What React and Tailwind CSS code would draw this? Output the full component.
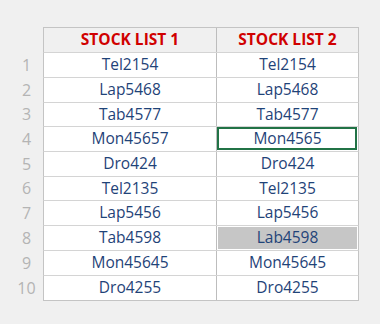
import React from "react";

const rows = [
    { n: 1, a: "Tel2154", b: "Tel2154", h: "h-[25px]" },
    { n: 2, a: "Lap5468", b: "Lap5468", h: "h-[25px]" },
    { n: 3, a: "Tab4577", b: "Tab4577", h: "h-[24px]" },
    { n: 4, a: "Mon45657", b: "Mon4565", h: "h-[25px]", active: true },
    { n: 5, a: "Dro424", b: "Dro424", h: "h-[25px]" },
    { n: 6, a: "Tel2135", b: "Tel2135", h: "h-[24px]" },
    { n: 7, a: "Lap5456", b: "Lap5456", h: "h-[25px]" },
    { n: 8, a: "Tab4598", b: "Lab4598", h: "h-[25px]", grey: true },
    { n: 9, a: "Mon45645", b: "Mon45645", h: "h-[25px]" },
    { n: 10, a: "Dro4255", b: "Dro4255", h: "h-[25px]" },
];

const App = () => {
    return (
        <div className="w-[380px] h-[324px] bg-[#f0f0f0] pt-[27px] font-['Open_Sans',sans-serif]">
            {/* header */}
            <div className="flex h-[25px]">
                <div className="w-[43px]" />
                <div className="flex border border-b-0 border-[#c4c4c4] bg-[#f0f0f0]">
                    <div className="w-[173px] border-r border-[#bdbdbd] flex items-center justify-center text-[15.5px] font-bold text-[#d00000] leading-none">
                        STOCK LIST 1
                    </div>
                    <div className="w-[141px] flex items-center justify-center text-[15.5px] font-bold text-[#d00000] leading-none">
                        STOCK LIST 2
                    </div>
                </div>
            </div>

            {rows.map((row) => (
                <div key={row.n} className={`flex ${row.h}`}>
                    <div className="w-[43px] pl-[10px] flex items-center">
                        <span className="w-[33px] text-center text-[16px] text-[#b4b4b4] leading-none">{row.n}</span>
                    </div>
                    <div className="flex border-x border-t border-x-[#c4c4c4] border-t-[#d4d4d4] bg-white">
                        <div className="w-[173px] border-r border-[#bdbdbd] flex items-center justify-center text-[15.5px] font-medium text-[#1f4378] leading-none">
                            {row.a}
                        </div>
                        <div className="w-[141px] relative flex items-center justify-center text-[15.5px] font-medium text-[#1f4378] leading-none">
                            {row.grey && (
                                <div className="absolute inset-[1px] bg-[#c6c6c6]" />
                            )}
                            {row.active && (
                                <div className="absolute top-0 left-0 right-[1px] bottom-[1px] border-2 border-[#217346]" />
                            )}
                            <span className="relative">{row.b}</span>
                        </div>
                    </div>
                </div>
            ))}
            <div className="flex">
                <div className="w-[43px]" />
                <div className="w-[316px] border-t border-[#c4c4c4]" />
            </div>
        </div>
    );
};

export default App;
